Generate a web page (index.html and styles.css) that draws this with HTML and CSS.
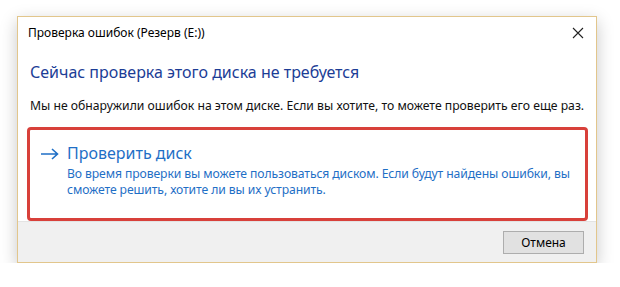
FILE: index.html
```html
<!DOCTYPE html>
<html lang="ru">
<head>
    <meta charset="UTF-8">
    <title>Проверка ошибок (Резерв (E:))</title>
    <link rel="stylesheet" href="styles.css">
</head>
<body>

<div class="window">
    <div class="titlebar">
        <span class="title">Проверка ошибок (Резерв (E:))</span>
        <span class="close">
            <svg width="12" height="12" viewBox="0 0 12 12">
                <path d="M1 1 L11 11 M11 1 L1 11" stroke="#222" stroke-width="1.1" fill="none"/>
            </svg>
        </span>
    </div>

    <div class="content">
        <h1 class="instruction">Сейчас проверка этого диска не требуется</h1>
        <p class="message">Мы не обнаружили ошибок на этом диске. Если вы хотите, то можете проверить его еще раз.</p>

        <div class="command">
            <div class="command-head">
                <svg class="arrow" width="18" height="12" viewBox="0 0 18 12">
                    <path d="M0 6 H16 M11 1 L16.5 6 L11 11" stroke="#1f6fc6" stroke-width="1.6" fill="none"/>
                </svg>
                <span class="command-title">Проверить диск</span>
            </div>
            <p class="command-text">Во время проверки вы можете пользоваться диском. Если будут найдены ошибки, вы сможете решить, хотите ли вы их устранить.</p>
        </div>
    </div>

    <div class="footer">
        <button class="btn">Отмена</button>
    </div>
</div>

</body>
</html>
```

FILE: styles.css
```css
body {
    margin: 0;
    background-color: #fff;
    font-family: "Noto Sans", "Open Sans", sans-serif;
}

.window {
    margin: 16px 0 0 17px;
    width: 578px;
    height: 245px;
    border: 1px solid #e2c68c;
    background-color: #fff;
    box-shadow: 0 5px 16px rgba(0, 0, 0, 0.22);
    display: flex;
    flex-direction: column;
}

.titlebar {
    height: 34px;
    display: flex;
    align-items: center;
    justify-content: space-between;
    padding: 0 10px 0 10px;
}

.title {
    font-size: 12px;
    color: #000;
}

.close {
    display: flex;
    margin-right: 2px;
}

.content {
    flex: 1;
    padding: 0 8px 0 9px;
}

.instruction {
    margin: 13px 0 0 3px;
    font-size: 16px;
    line-height: 22px;
    font-weight: normal;
    color: #1c3d96;
}

.message {
    margin: 14px 0 0 3px;
    font-size: 12.2px;
    line-height: 17px;
    color: #111;
}

.command {
    margin-top: 13px;
    height: 76px;
    border: 3px solid #d8403a;
    border-radius: 4px;
    padding: 12px 2px 0 11px;
}

.command-head {
    display: flex;
    align-items: center;
    gap: 8px;
    height: 22px;
}

.arrow {
    margin-top: 1px;
}

.command-title {
    font-size: 16px;
    line-height: 22px;
    color: #1f6fc6;
}

.command-text {
    margin: 2px 0 0 26px;
    font-size: 12.2px;
    line-height: 16px;
    color: #1f6fc6;
    letter-spacing: -0.1px;
}

.footer {
    height: 43px;
    border-top: 1px solid #e3e3e3;
    background-color: #f0f0f0;
    display: flex;
    align-items: center;
    justify-content: flex-end;
    padding-right: 12px;
}

.btn {
    width: 81px;
    height: 23px;
    font-family: "Noto Sans", "Open Sans", sans-serif;
    font-size: 12px;
    color: #000;
    background-color: #e1e1e1;
    border: 1px solid #adadad;
    padding: 0;
}
```
